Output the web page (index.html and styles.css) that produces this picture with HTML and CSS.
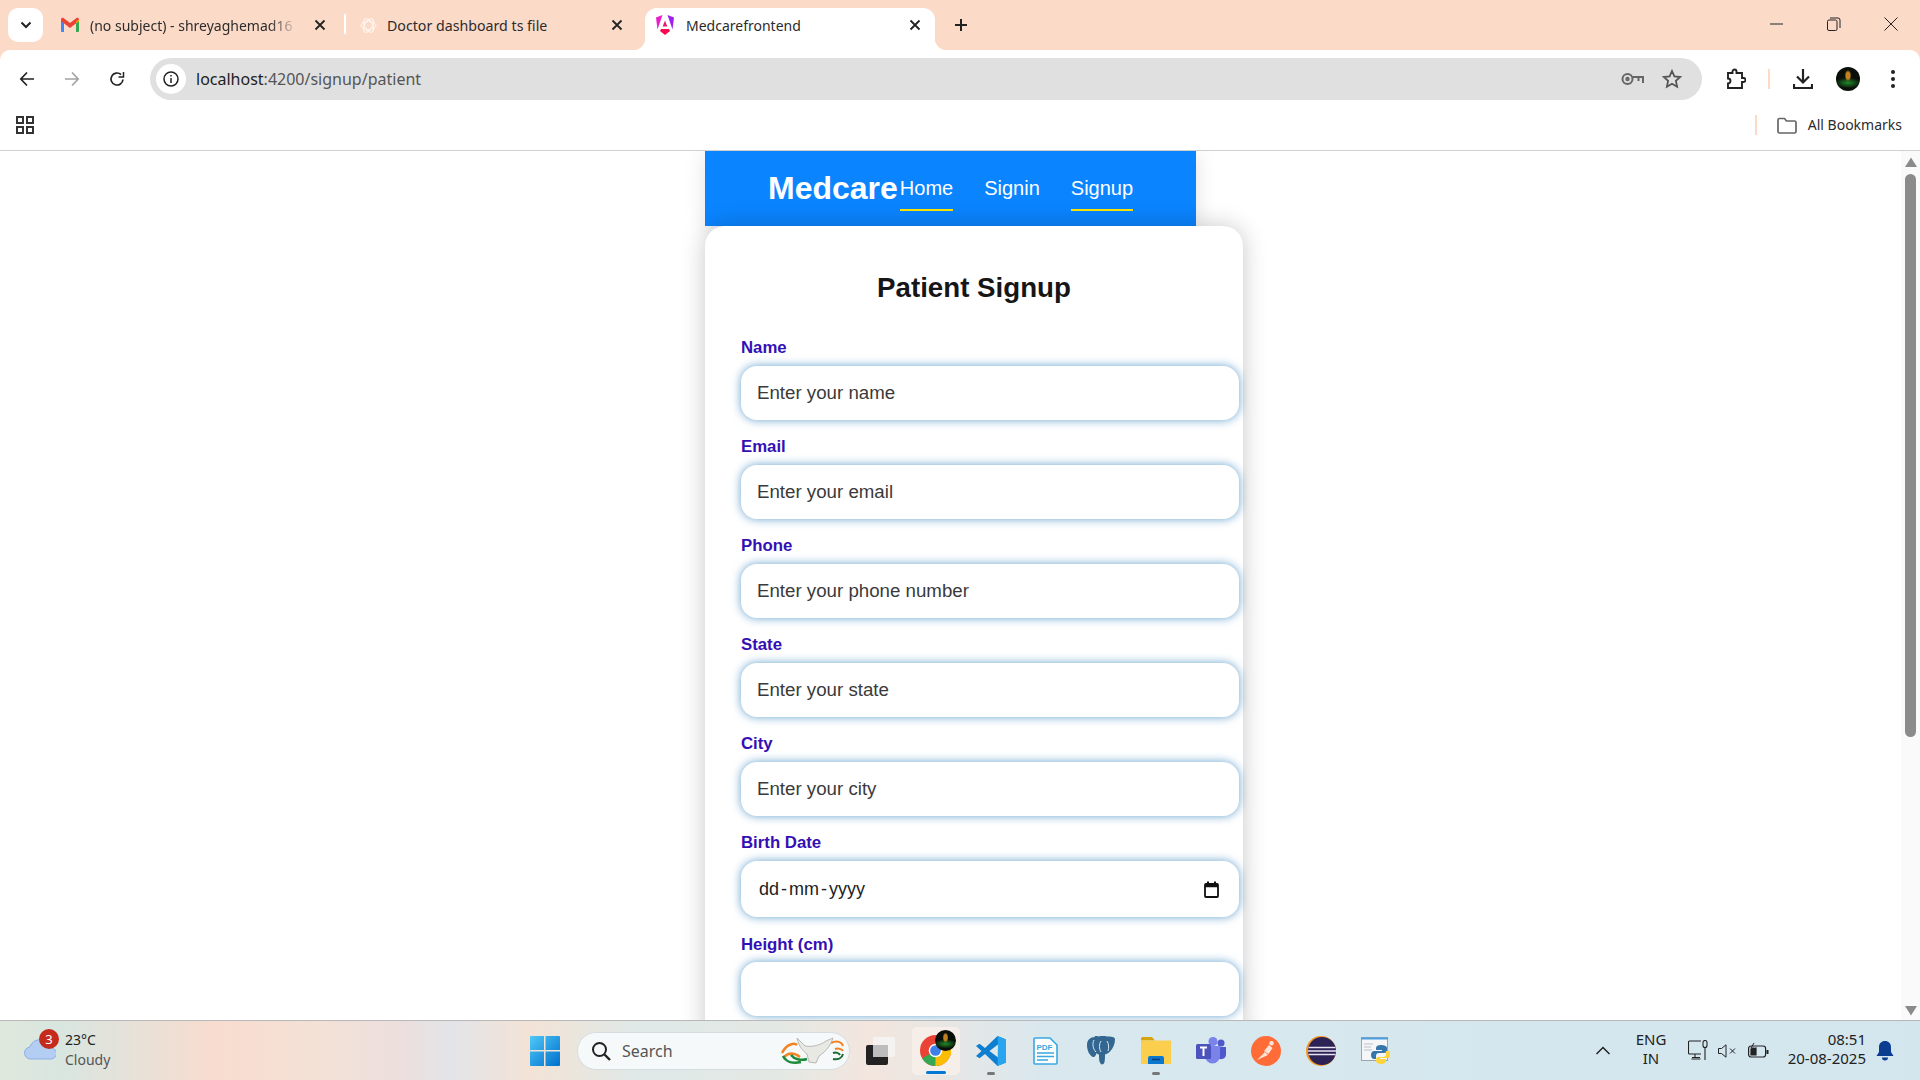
FILE: index.html
```html
<!DOCTYPE html>
<html lang="en">

<head>
    <meta charset="UTF-8">
    <title>Medcarefrontend</title>
    <link rel="stylesheet" href="styles.css">
</head>

<body>
    <!-- tabs -->
    <div class="tab-strip">
        <div class="tab-menu">
            <svg width="12" height="8" viewBox="0 0 12 8"><path d="M1.500 1.500 6 6l4.500-4.500" fill="none" stroke="#222" stroke-width="2"/></svg>
        </div>
        <div class="tab tab-gmail">
            <svg class="tab-icon" width="20" height="16" viewBox="0 0 20 16">
                <path d="M1 15V3l3 2v10H2a1 1 0 0 1-1-1z" fill="#4285f4"/>
                <path d="M16 15V5l3-2v11a1 1 0 0 1-1 1z" fill="#34a853"/>
                <path d="M1 4V2.500C1 1 2.700.4 3.800 1.200L10 6l6.200-4.800C17.300.4 19 1 19 2.500V4l-9 7z" fill="#ea4335"/>
                <path d="M16 5l3-2.500V4l-3 2.300z" fill="#fbbc04"/>
            </svg>
            <span class="tab-title fade">(no subject) - shreyaghemad16</span>
            <svg class="tab-close" width="12" height="12" viewBox="0 0 12 12"><path d="M1.500 1.500l9 9m0-9l-9 9" stroke="#222" stroke-width="1.800"/></svg>
        </div>
        <div class="tab-sep"></div>
        <div class="tab tab-gpt">
            <svg class="tab-icon" width="17" height="17" viewBox="0 0 17 17" fill="none" stroke="#fff" stroke-width="1" opacity=".8">
                <ellipse cx="8.500" cy="8.500" rx="7.500" ry="4"/>
                <ellipse cx="8.500" cy="8.500" rx="7.500" ry="4" transform="rotate(60 8.500 8.500)"/>
                <ellipse cx="8.500" cy="8.500" rx="7.500" ry="4" transform="rotate(120 8.500 8.500)"/>
            </svg>
            <span class="tab-title">Doctor dashboard ts file</span>
            <svg class="tab-close" width="12" height="12" viewBox="0 0 12 12"><path d="M1.500 1.500l9 9m0-9l-9 9" stroke="#222" stroke-width="1.800"/></svg>
        </div>
        <div class="tab tab-active">
            <svg class="tab-icon" width="20" height="22" viewBox="0 0 20 22">
                <path d="M7.500 1 1 3.500l1.500 12z" fill="#e91ec8"/>
                <path d="M12.500 1 19 3.500l-1.500 12z" fill="#a020f0"/>
                <path d="M10 6.500l2.300 6H7.700z" fill="#e8186c"/>
                <path d="M6 15h8l1 2-5 4-5-4z" fill="#f70a50"/>
            </svg>
            <span class="tab-title">Medcarefrontend</span>
            <svg class="tab-close" width="12" height="12" viewBox="0 0 12 12"><path d="M1.500 1.500l9 9m0-9l-9 9" stroke="#222" stroke-width="1.800"/></svg>
        </div>
        <svg class="new-tab" width="16" height="16" viewBox="0 0 16 16"><path d="M8 2v12M2 8h12" stroke="#222" stroke-width="2"/></svg>
        <div class="win-controls">
            <div class="win-btn"><svg width="14" height="14" viewBox="0 0 14 14"><path d="M0 7h13" stroke="#222"/></svg></div>
            <div class="win-btn"><svg width="14" height="14" viewBox="0 0 14 14" fill="none" stroke="#222"><rect x=".5" y="3" width="9.500" height="10.500" rx="1.500"/><path d="M3 1h8a2 2 0 0 1 2 2v8"/></svg></div>
            <div class="win-btn"><svg width="14" height="14" viewBox="0 0 14 14"><path d="M.5.500l13 13m0-13l-13 13" stroke="#222"/></svg></div>
        </div>
    </div>

    <!-- address bar -->
    <div class="toolbar">
        <div class="tool-btn"><svg width="16" height="16" viewBox="0 0 16 16" fill="none" stroke="#222" stroke-width="1.700"><path d="M15 8H2M8 1.500 1.800 8 8 14.500"/></svg></div>
        <div class="tool-btn"><svg width="16" height="16" viewBox="0 0 16 16" fill="none" stroke="#a3a3a3" stroke-width="1.700"><path d="M1 8h13M8 1.500 14.200 8 8 14.500"/></svg></div>
        <div class="tool-btn"><svg width="16" height="16" viewBox="0 0 16 16" fill="none" stroke="#222" stroke-width="1.700"><path d="M14 8.500A6 6 0 1 1 12 3.500"/><path d="M14.500 1v5h-5" stroke-width="1.500"/></svg></div>
        <div class="omnibox">
            <div class="info-bubble">
                <svg width="16" height="16" viewBox="0 0 16 16" fill="none" stroke="#222" stroke-width="1.500"><circle cx="8" cy="8" r="7"/><path d="M8 7v5M8 4v1.600"/></svg>
            </div>
            <div class="url"><span class="url-host">localhost</span>:4200/signup/patient</div>
            <svg class="omni-key" width="24" height="14" viewBox="0 0 24 14" fill="none" stroke="#666" stroke-width="2"><circle cx="6.500" cy="7" r="5"/><circle cx="6.500" cy="7" r="1.200"/><path d="M11.500 5H22v6M17.500 5v4"/></svg>
            <svg class="omni-star" width="20" height="20" viewBox="0 0 20 20" fill="none" stroke="#555" stroke-width="1.800"><path d="M10 2l2.400 5.400 5.800.6-4.300 3.900 1.200 5.800L10 14.800l-5.100 2.900 1.200-5.800L1.800 8l5.800-.6z"/></svg>
        </div>
        <div class="tool-puzzle"><svg width="20" height="22" viewBox="0 0 20 22" fill="none" stroke="#222" stroke-width="1.900"><path d="M2 5h4.500V3.500a2 2 0 0 1 4 0V5H16v5h1.500a2 2 0 0 1 0 4H16v6H2v-4.500a2.500 2.500 0 0 0 0-5z"/></svg></div>
        <div class="tool-sep"></div>
        <div class="tool-download"><svg width="20" height="22" viewBox="0 0 20 22" fill="none" stroke="#222" stroke-width="2.200"><path d="M10 1v13M4 8.500l6 6 6-6M1 16v4h18v-4"/></svg></div>
        <div class="avatar"></div>
        <div class="tool-menu"><i></i><i></i><i></i></div>
    </div>

    <!-- bookmarks -->
    <div class="bookmarks">
        <svg width="18" height="18" viewBox="0 0 18 18" fill="none" stroke="#333" stroke-width="2"><rect x="1" y="1" width="6" height="6"/><rect x="11" y="1" width="6" height="6"/><rect x="1" y="11" width="6" height="6"/><rect x="11" y="11" width="6" height="6"/></svg>
        <div class="bm-sep"></div>
        <svg class="bm-folder" width="20" height="17" viewBox="0 0 20 17" fill="none" stroke="#666" stroke-width="1.700"><path d="M1 3a1.500 1.500 0 0 1 1.500-1.500h5L9.500 4h8A1.500 1.500 0 0 1 19 5.500v9a1.500 1.500 0 0 1-1.500 1.500h-15A1.500 1.500 0 0 1 1 14.500z"/></svg>
        <span class="bm-text">All Bookmarks</span>
    </div>

    <!-- page -->
    <div class="viewport">
        <div class="page">
            <div class="navbar">
                <div class="logo">Medcare</div>
                <a class="nav-link active">Home</a>
                <a class="nav-link">Signin</a>
                <a class="nav-link active">Signup</a>
            </div>
            <div class="card">
                <h2>Patient Signup</h2>
                <div class="field">
                    <label>Name</label>
                    <input type="text" placeholder="Enter your name">
                </div>
                <div class="field">
                    <label>Email</label>
                    <input type="text" placeholder="Enter your email">
                </div>
                <div class="field">
                    <label>Phone</label>
                    <input type="text" placeholder="Enter your phone number">
                </div>
                <div class="field">
                    <label>State</label>
                    <input type="text" placeholder="Enter your state">
                </div>
                <div class="field">
                    <label>City</label>
                    <input type="text" placeholder="Enter your city">
                </div>
                <div class="field">
                    <label>Birth Date</label>
                    <div class="date-box">
                        <span>dd - mm - yyyy</span>
                        <svg width="15" height="17" viewBox="0 0 15 17" fill="none" stroke="#111"><path d="M1 4.500h13" stroke-width="3.500"/><path d="M4 .500v2M11 .500v2" stroke-width="2"/><rect x="1" y="3" width="13" height="13" rx="1" stroke-width="1.800"/></svg>
                    </div>
                </div>
                <div class="field field-height">
                    <label>Height (cm)</label>
                    <input type="text">
                </div>
            </div>
        </div>
        <div class="scrollbar">
            <svg width="12" height="10" viewBox="0 0 12 10"><path d="M6 .500 12 10H0z" fill="#8b8b8b"/></svg>
            <div class="scroll-thumb"></div>
            <svg class="scroll-down" width="12" height="10" viewBox="0 0 12 10"><path d="M6 9.500 0 0h12z" fill="#8b8b8b"/></svg>
        </div>
    </div>

    <!-- taskbar -->
    <div class="taskbar">
        <div class="weather">
            <div class="weather-icon">
                <svg width="32" height="22" viewBox="0 0 32 22"><path d="M7 21a6 6 0 0 1-1-12C8 3 14 0 20 3c5 1 7 4 7 7a5.500 5.500 0 0 1 0 11z" fill="#b4cdf2" stroke="#8fb0e6"/></svg>
                <span class="weather-badge">3</span>
            </div>
            <div class="weather-text">
                <div>23°C</div>
                <div class="weather-sub">Cloudy</div>
            </div>
        </div>
        <svg class="start" width="30" height="30" viewBox="0 0 30 30">
            <defs>
                <linearGradient id="win" x1="0" y1="0" x2="1" y2="1"><stop offset="0" stop-color="#4fc8f8"/><stop offset="1" stop-color="#0070cc"/></linearGradient>
            </defs>
            <path d="M0 1a1 1 0 0 1 1-1h13v14H0zM15.500 0H29a1 1 0 0 1 1 1v13H15.500zM0 15.500h14V30H1a1 1 0 0 1-1-1zM15.500 15.500H30V29a1 1 0 0 1-1 1H15.500z" fill="url(#win)"/>
        </svg>
        <div class="search">
            <svg width="20" height="20" viewBox="0 0 20 20" fill="none" stroke="#222" stroke-width="2"><circle cx="8.500" cy="8.500" r="6.500"/><path d="M13.500 13.500 19 19" stroke-width="2.400"/></svg>
            <span class="search-text">Search</span>
            <svg class="search-dove" width="64" height="32" viewBox="0 0 64 32" fill="none">
                <path d="M1 18C6 8 14 8 16 10M3 22c6-6 12-3 16 0" stroke="#f58220" stroke-width="2.500"/>
                <path d="M2 21c3 6 10 8 18 6M10 20c3 4 10 6 16 4" stroke="#1a8a3a" stroke-width="2.500"/>
                <path d="M50 8c6-3 11-1 12 3M54 14c3-1 7 0 8 2" stroke="#f58220" stroke-width="2"/>
                <path d="M52 24c5 1 9-1 10-5M52 18c3-1 6 0 7 2" stroke="#1a6a30" stroke-width="2"/>
                <path d="M16 3l8 8c6 1 14 0 21-5 2-1 7-3 7-3-2 6-6 13-14 18l-3 7-7-1-2-8c-4-3-8-7-10-16z" fill="#e9e9e4" stroke="#aaa" stroke-width=".8"/>
            </svg>
        </div>
        <div class="app">
            <svg width="29" height="28" viewBox="0 0 29 28"><rect x="7" y="0" width="22" height="20" rx="2" fill="#f4f4f4" opacity=".9"/><rect x="0" y="8" width="22" height="20" rx="2" fill="#222"/><rect x="7" y="8" width="15" height="12" fill="#bdbdbd"/></svg>
        </div>
        <div class="app app-open">
            <svg width="31" height="31" viewBox="0 0 32 32" fill="none" stroke-width="10">
                <circle cx="16" cy="16" r="11" stroke="#ea4335"/>
                <path d="M6.500 21.500A11 11 0 0 0 16 27l5-10" stroke="#34a853" stroke-width="10"/>
                <path d="M16 27A11 11 0 0 0 26 11H16" stroke="#fbbc04" stroke-width="10"/>
                <circle cx="16" cy="16" r="7" fill="#fff" stroke="none"/>
                <circle cx="16" cy="16" r="5.500" fill="#3f7fe8" stroke="none"/>
            </svg>
            <span class="avatar avatar-badge"></span>
            <span class="app-bar"></span>
        </div>
        <div class="app">
            <svg width="30" height="30" viewBox="0 0 30 30">
                <path d="M21.500 0 9 12 3.500 7.800 0 10l5.500 5L0 20l3.500 2.200L9 18l12.500 12 8.500-3.500V3.500zM22 8.500v13L13.500 15z" fill="#0e7fd0"/>
                <path d="M21.500 0 30 3.500v23L21.500 30 22 8.500z" fill="#27a5ef"/>
            </svg>
            <span class="app-dot"></span>
        </div>
        <div class="app">
            <svg width="25" height="28" viewBox="0 0 25 28" fill="#fff"><path d="M1 2a1 1 0 0 1 1-1h15l7 7v18a1 1 0 0 1-1 1H2a1 1 0 0 1-1-1z" stroke="#3aa8e0" stroke-width="1.600"/><text x="3.500" y="13" class="pdf-label">PDF</text><path d="M4 16h17M4 19.500h17M4 23h11" stroke="#3aa8e0" stroke-width="1.500"/></svg>
        </div>
        <div class="app">
            <svg width="28" height="29" viewBox="0 0 28 29"><path d="M8 1C3 1 0 4 0 9c0 6 3 11 6 12 2 .5 3-2 3.500-4 1 1 2 1.500 2.500 1.500 0 4 0 9 3 10 3 0 3-5 3-10 3-1 4-2 5-3 3-3 5-8 5-12 0-3-4-3-8-3-3-1-6-1-8 0-2-.5-3-.5-4.500-.5z" fill="#336791"/><path d="M7 4c-2 4-1 9 2 12M14 5c-2 3-2 8 0 11M20 5c2 3 2 7 1 10" fill="none" stroke="#d8e8ee" stroke-width="1"/></svg>
        </div>
        <div class="app">
            <svg width="30" height="27" viewBox="0 0 30 27"><path d="M0 1.500A1.500 1.500 0 0 1 1.500 0H11l3 3.500H0z" fill="#d9a30f"/><path d="M0 3.500h30V27H0z" fill="#fbcf4d"/><path d="M9 19h12a2 2 0 0 1 2 2v6H7v-6a2 2 0 0 1 2-2z" fill="#0a78d0"/><path d="M11 22.500h8" stroke="#063f78" stroke-width="1.500"/></svg>
            <span class="app-dot"></span>
        </div>
        <div class="app">
            <svg width="30" height="27" viewBox="0 0 30 27"><circle cx="25" cy="6" r="3.500" fill="#5059c9"/><circle cx="17" cy="4.500" r="4.500" fill="#7b83eb"/><path d="M21 10h9v8a5 5 0 0 1-9 2z" fill="#5059c9"/><path d="M9 9h15v10a7.500 7.500 0 0 1-15 0z" fill="#7b83eb"/><rect x="0" y="7" width="15" height="15" rx="1.500" fill="#4b53bc"/><path d="M4 10.500h7M7.500 10.500V19" stroke="#fff" stroke-width="2"/></svg>
        </div>
        <div class="app">
            <svg width="30" height="30" viewBox="0 0 30 30"><circle cx="15" cy="15" r="15" fill="#ff6c37"/><path d="M6 24 14 16l3 3zM13 15l5-6 3.500 3-4 6zM20 5a2.200 2.200 0 1 1 .1 4.300A2.200 2.200 0 0 1 20 5z" fill="#fbe3d8"/></svg>
        </div>
        <div class="app">
            <svg width="30" height="30" viewBox="0 0 30 30"><circle cx="15" cy="15" r="15" fill="#f7941e"/><circle cx="16" cy="15" r="14" fill="#2c2255"/><path d="M2.500 11.500h27M2 15h28M2.500 18.500h27" stroke="#e8e4f4" stroke-width="1.600"/></svg>
        </div>
        <div class="app">
            <svg width="29" height="27" viewBox="0 0 29 27"><rect x=".5" y=".5" width="26" height="23" fill="#f4f6f8" stroke="#9aa5ad"/><path d="M0 1.500h27" stroke="#4aa0e0" stroke-width="2"/><path d="M3 7h9M3 10h7M3 13h8" stroke="#b9c2c9"/><path d="M18 8c-3 0-5 1-5 3v2h6v1h-8c-2 0-3 2-3 4s1 4 3 4h2v-3c0-2 1-3 3-3h5c2 0 3-1 3-3v-2c0-2-3-3-6-3z" fill="#3776ab" transform="translate(2 0)"/><path d="M20 27c3 0 5-1 5-3v-2h-6v-1h8c2 0 2-2 2-4s-.5-3-2-3h-2v3c0 2-1 3-3 3h-5c-1 0-2 1-2 3v1c0 2 3 3 5 3z" fill="#ffd43b"/></svg>
        </div>
        <div class="tray">
            <svg class="tray-chevron" width="16" height="9" viewBox="0 0 16 9" fill="none" stroke="#222" stroke-width="1.500"><path d="M1.500 8 8 1.500 14.500 8"/></svg>
            <div class="tray-lang"><div>ENG</div><div>IN</div></div>
            <svg class="tray-monitor" width="20" height="21" viewBox="0 0 20 21" fill="none" stroke="#222" stroke-width="1.100"><path d="M13 14H1.500a1 1 0 0 1-1-1V2a1 1 0 0 1 1-1H13M7 14v4M3.500 19h9M4 17.500h8"/><rect x="15" y=".5" width="4" height="7" rx="2"/><path d="M17 7.500V20"/></svg>
            <svg class="tray-sound" width="19" height="14" viewBox="0 0 19 14" fill="none" stroke="#222"><path d="M.5 4.500h3L8 .8v12.400L3.500 9.500h-3zM12 4.500l5 5m0-5l-5 5"/></svg>
            <svg class="tray-battery" width="21" height="15" viewBox="0 0 21 15" fill="none" stroke="#222" stroke-width="1.200"><rect x=".6" y="3" width="17" height="11" rx="2.500"/><path d="M19.500 7v4" stroke-width="2"/><path d="M3 12V6l5-1v7z" fill="#222"/><path d="M6 0 3 5h3l-1.500 3" stroke-width="1"/></svg>
            <div class="tray-clock"><div>08:51</div><div>20-08-2025</div></div>
            <svg class="tray-bell" width="18" height="20" viewBox="0 0 18 20" fill="#0b3d91"><path d="M9 0c3.500 0 6 2.500 6 6v5l2.500 4H.5L3 11V6c0-3.500 2.500-6 6-6zM6 16.500h6a3 3 0 0 1-6 0z"/></svg>
        </div>
    </div>
</body>

</html>
```

FILE: styles.css
```css
*{
    margin: 0;
    padding: 0;
    box-sizing: border-box;
}
body{
    width: 1920px;
    height: 1080px;
    overflow: hidden;
    background-color: #fcdac8;
    display: flex;
    flex-direction: column;
    font-family: "Liberation Sans", Arial, sans-serif;
}

/* chrome tabs */
.tab-strip{
    height: 50px;
    display: flex;
    align-items: flex-start;
    font-family: "Noto Sans", sans-serif;
    font-size: 14px;
    color: #2c2c2c;
}
.tab-menu{
    width: 35px;
    height: 34px;
    margin: 8px 0 0 8px;
    background-color: white;
    border-radius: 10px;
    display: flex;
    align-items: center;
    justify-content: center;
}
.tab{
    height: 34px;
    margin-top: 8px;
    display: flex;
    align-items: center;
}
.tab-title{
    flex: 1;
    overflow: hidden;
    white-space: nowrap;
}
.fade{
    -webkit-mask-image: linear-gradient(to right, black 80%, transparent 93%);
    mask-image: linear-gradient(to right, black 80%, transparent 93%);
}
.tab-gmail{
    width: 266px;
    margin-left: 17px;
}
.tab-gmail .tab-icon{
    margin-right: 10px;
}
.tab-sep{
    width: 2px;
    height: 20px;
    margin: 14px 0 0 18px;
    background-color: white;
}
.tab-gpt{
    width: 263px;
    margin-left: 14px;
    font-size: 14.2px;
}
.tab-gpt .tab-icon{
    margin-right: 10px;
}
.tab-active{
    position: relative;
    width: 290px;
    height: 42px;
    margin-left: 22px;
    padding: 0 14px 8px 10px;
    background-color: white;
    border-radius: 12px 12px 0 0;
}
.tab-active .tab-icon{
    margin-right: 11px;
}
.tab-active::before,
.tab-active::after{
    content: "";
    position: absolute;
    bottom: 0;
    width: 12px;
    height: 12px;
}
.tab-active::before{
    left: -12px;
    background: radial-gradient(circle at 0 0, transparent 12px, white 12.5px);
}
.tab-active::after{
    right: -12px;
    background: radial-gradient(circle at 100% 0, transparent 12px, white 12.5px);
}
.new-tab{
    margin: 17px 0 0 18px;
}
.win-controls{
    margin-left: auto;
    padding-right: 1px;
    display: flex;
}
.win-btn{
    width: 57px;
    height: 48px;
    display: flex;
    align-items: center;
    justify-content: center;
}

/* address bar */
.toolbar{
    height: 50px;
    padding: 8px 0 0 4px;
    background-color: white;
    border-radius: 10px 10px 0 0;
    display: flex;
    align-items: center;
}
.tool-btn{
    width: 45px;
    display: flex;
    justify-content: center;
}
.omnibox{
    width: 1552px;
    height: 42px;
    margin-left: 11px;
    padding: 0 20px 0 6px;
    background-color: #e0e0e0;
    border-radius: 21px;
    display: flex;
    align-items: center;
}
.info-bubble{
    width: 30px;
    height: 30px;
    border-radius: 50%;
    background-color: white;
    display: flex;
    align-items: center;
    justify-content: center;
}
.url{
    flex: 1;
    margin-left: 10px;
    font-family: "Noto Sans", sans-serif;
    font-size: 16px;
    color: #555;
}
.url-host{
    color: #222;
}
.omni-star{
    margin-left: 17px;
}
.tool-puzzle{
    width: 40px;
    margin-left: 14px;
    display: flex;
    justify-content: center;
}
.tool-sep{
    width: 2px;
    height: 20px;
    margin-left: 12px;
    background-color: #fcdac8;
}
.tool-download{
    width: 40px;
    margin-left: 13px;
    display: flex;
    justify-content: center;
}
.avatar{
    display: block;
    width: 24px;
    height: 24px;
    margin-left: 13px;
    border-radius: 50%;
    background:
        radial-gradient(ellipse 14% 24% at 50% 36%, #c0801f 60%, transparent 100%),
        radial-gradient(ellipse 55% 22% at 50% 66%, #1f8a2a, transparent 100%),
        #0a0e08;
}
.tool-menu{
    width: 20px;
    margin-left: 23px;
    display: flex;
    flex-direction: column;
    align-items: center;
    gap: 3px;
}
.tool-menu i{
    width: 4px;
    height: 4px;
    border-radius: 50%;
    background-color: #222;
}

/* bookmarks */
.bookmarks{
    height: 51px;
    padding: 0 18px 0 16px;
    background-color: white;
    border-bottom: 1px solid #d0d0d0;
    display: flex;
    align-items: center;
}
.bm-sep{
    width: 2px;
    height: 20px;
    margin-left: auto;
    background-color: #fcdac8;
}
.bm-folder{
    margin-left: 20px;
}
.bm-text{
    margin: 0 0 2px 11px;
    font-family: "Noto Sans", sans-serif;
    font-size: 14px;
    color: #2c2c2c;
}

/* the page */
.viewport{
    height: 869px;
    background-color: white;
    display: flex;
}
.page{
    flex: 1;
    padding-left: 705px;
    overflow: hidden;
}
.navbar{
    width: 491px;
    height: 75px;
    padding-left: 63px;
    background-color: #0a84ff;
    box-shadow: 0 2px 20px rgba(0, 0, 0, 0.12);
    display: flex;
    align-items: flex-start;
}
.logo{
    margin: 19px 2px 0 0;
    font-size: 32px;
    font-weight: bold;
    color: white;
}
.nav-link{
    margin: 26px 31px 0 0;
    padding-bottom: 9px;
    border-bottom: 2px solid transparent;
    font-size: 20px;
    color: white;
}
.nav-link.active{
    border-bottom-color: #ffe600;
}
.card{
    position: relative;
    width: 538px;
    height: 900px;
    padding: 46px 36px 0;
    background-color: white;
    border-radius: 20px;
    box-shadow: 0 0 24px rgba(0, 0, 0, 0.22);
}
.card h2{
    height: 32px;
    margin-bottom: 34px;
    font-size: 27.7px;
    text-align: center;
    color: #161616;
}
.field{
    margin-bottom: 17px;
}
.field label{
    display: block;
    height: 18px;
    margin-bottom: 10px;
    font-size: 16.8px;
    font-weight: bold;
    color: #3410b4;
}
.field-height label{
    height: 20px;
    padding-top: 1px;
    margin-bottom: 8px;
}
.field input,
.date-box{
    box-sizing: content-box;
    display: block;
    width: 100%;
    height: 22px;
    padding: 16px;
    border: none;
    outline: none;
    border-radius: 16px;
    background-color: white;
    box-shadow: 0 0 10px rgba(20, 110, 180, 0.65);
    font-family: "Liberation Sans", Arial, sans-serif;
    font-size: 18.7px;
    color: #222;
}
.field input::placeholder{
    color: #3a3a3a;
    opacity: 1;
}
.date-box{
    height: 24px;
    display: flex;
    align-items: center;
    justify-content: space-between;
    padding-right: 20px;
    width: calc(100% - 4px);
    font-size: 18px;
}
.date-box span{
    margin-left: 2px;
    word-spacing: -3px;
}

/* scrollbar */
.scrollbar{
    width: 19px;
    background-color: #fafafa;
    display: flex;
    flex-direction: column;
    align-items: center;
    padding-top: 6px;
}
.scroll-thumb{
    width: 11px;
    height: 563px;
    margin-top: 7px;
    border-radius: 6px;
    background-color: #8b8b8b;
}
.scroll-down{
    margin-top: auto;
    margin-bottom: 4px;
}

/* windows taskbar */
.taskbar{
    height: 60px;
    padding-left: 24px;
    border-top: 1px solid #b8b8b8;
    background: linear-gradient(to right, #dfe8dc 0, #d8e6e0 60px, #f8dccf 215px, #f3e1d6 320px, #ecdfdd 400px, #e3e4e8 450px, #f3e3d6 530px, #dfe9e8 640px, #e4e8e4 780px, #f3e6de 870px, #d8e8ee 1050px, #d3e6ee 1920px);
    display: flex;
    align-items: center;
}
.weather{
    width: 506px;
    display: flex;
    align-items: center;
}
.weather-icon{
    position: relative;
    width: 32px;
    height: 22px;
    margin-top: -4px;
}
.weather-badge{
    position: absolute;
    top: -9px;
    left: 15px;
    width: 20px;
    height: 20px;
    border-radius: 50%;
    background-color: #c42b1c;
    color: white;
    font-family: "Noto Sans", sans-serif;
    font-size: 13px;
    line-height: 20px;
    text-align: center;
}
.weather-text{
    margin: 0 0 2px 9px;
    font-family: "Noto Sans", sans-serif;
    font-size: 14px;
    line-height: 20px;
    color: #222;
}
.weather-sub{
    color: #555;
}
.start{
    margin-right: 17px;
}
.search{
    width: 273px;
    height: 38px;
    margin-right: 3px;
    padding-left: 13px;
    border: 1px solid #d6dde0;
    border-radius: 19px;
    background-color: #f6f9f9;
    display: flex;
    align-items: center;
}
.search-text{
    margin-left: 11px;
    font-family: "Noto Sans", sans-serif;
    font-size: 16px;
    color: #555;
}
.search-dove{
    margin-left: auto;
    margin-right: 4px;
}
.app{
    position: relative;
    width: 55px;
    height: 48px;
    display: flex;
    align-items: center;
    justify-content: center;
}
.app-open::before{
    content: "";
    position: absolute;
    top: 0;
    left: 4px;
    width: 48px;
    height: 48px;
    border-radius: 5px;
    background-color: #f5eee9;
}
.app-open svg{
    position: relative;
}
.avatar-badge{
    position: absolute;
    top: 3px;
    left: 27px;
    width: 21px;
    height: 21px;
    margin: 0;
}
.app-bar{
    position: absolute;
    bottom: 1px;
    left: 18px;
    width: 20px;
    height: 3px;
    border-radius: 2px;
    background-color: #0078d4;
}
.app-dot{
    position: absolute;
    bottom: 0;
    left: 24px;
    width: 8px;
    height: 3px;
    border-radius: 2px;
    background-color: #777;
}
.pdf-label{
    font-family: "Liberation Sans", Arial, sans-serif;
    font-size: 8px;
    font-weight: bold;
    fill: #3aa8e0;
}
.tray{
    margin-left: auto;
    padding-right: 26px;
    display: flex;
    align-items: center;
    font-family: "Noto Sans", sans-serif;
    font-size: 15px;
    color: #222;
}
.tray-lang{
    width: 36px;
    margin: 0 0 3px 22px;
    text-align: center;
    line-height: 19px;
}
.tray-monitor{
    margin-left: 19px;
}
.tray-sound{
    margin-left: 10px;
}
.tray-battery{
    margin-left: 11px;
}
.tray-clock{
    width: 90px;
    margin: 0 0 3px 7px;
    text-align: right;
    line-height: 19px;
}
.tray-bell{
    margin-left: 10px;
}
```
